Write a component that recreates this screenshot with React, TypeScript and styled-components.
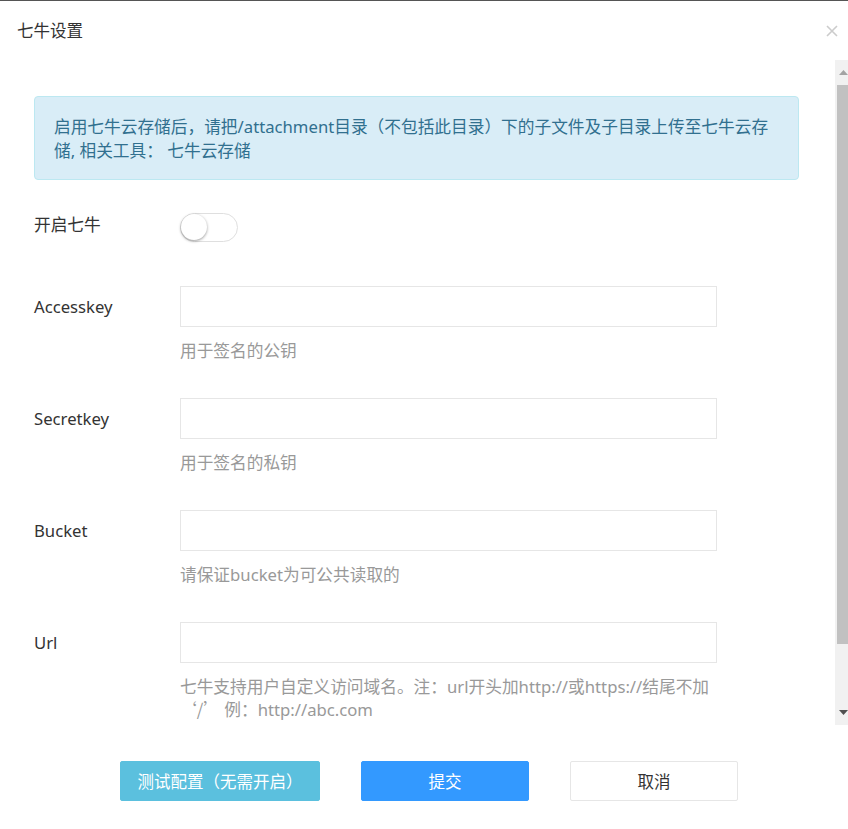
import React, { useState } from "react";
import styled, { createGlobalStyle } from "styled-components";

const GlobalStyle = createGlobalStyle`
  html, body {
    margin: 0;
    padding: 0;
    background: #ffffff;
    overflow: hidden;
  }
  * {
    box-sizing: border-box;
  }
`;

const font = `"Noto Sans", "Noto Sans CJK SC", sans-serif`;
const cjk = `"Noto Sans CJK SC", sans-serif`;

const Dialog = styled.div`
  width: 852px;
  height: 829px;
  border-top: 1px solid #555555;
  background: #ffffff;
  font-family: ${font};
  color: #333333;
  display: flex;
  flex-direction: column;
`;

const Header = styled.div`
  height: 59px;
  display: flex;
  align-items: center;
  justify-content: space-between;
  padding: 0 14px 0 17px;
`;

const Title = styled.h3`
  margin: 0;
  font-size: 16.5px;
  font-weight: 400;
  color: #333333;
  line-height: 22px;
`;

const Close = styled.button`
  border: 0;
  background: transparent;
  padding: 0;
  width: 12px;
  height: 12px;
  display: flex;
  cursor: pointer;
`;

const Main = styled.div`
  display: flex;
  height: 665px;
`;

const Body = styled.div`
  flex: 1;
  overflow: hidden;
  padding: 36px 36px 72px 34px;
`;

/* drawn scrollbar: headless capture hides native ones */
const ScrollTrack = styled.div`
  width: 17px;
  flex-shrink: 0;
  background: #f1f1f1;
  display: flex;
  flex-direction: column;
`;

const ScrollButton = styled.div`
  height: 25px;
  display: flex;
  align-items: center;
  justify-content: center;
`;

const Thumb = styled.div`
  height: 559px;
  margin: 0 2px;
  background: #c1c1c1;
`;

const Spacer = styled.div`
  flex: 1;
`;

const Alert = styled.div`
  background: #d9edf7;
  border: 1px solid #bce8f1;
  border-radius: 4px;
  color: #31708f;
  font-size: 16.7px;
  line-height: 24px;
  padding: 18px 15px 16px 19px;
`;

const AlertLink = styled.a`
  color: #31708f;
  text-decoration: none;
`;

const Row = styled.div<{ $gap?: number }>`
  display: flex;
  align-items: flex-start;
  margin-top: ${(p) => p.$gap ?? 36}px;
`;

const Label = styled.label<{ $h?: number }>`
  width: 146px;
  flex-shrink: 0;
  font-size: 16.7px;
  line-height: ${(p) => p.$h ?? 41}px;
  color: #333333;
`;

const Field = styled.div`
  width: 537px;
`;

const Input = styled.input`
  display: block;
  width: 537px;
  height: 41px;
  border: 1px solid #e6e6e6;
  border-radius: 0;
  outline: none;
  padding: 0 10px;
  font-family: ${font};
  font-size: 16px;
  color: #333333;
  background: #ffffff;
`;

const Help = styled.div`
  margin-top: 13px;
  font-size: 16.7px;
  line-height: 22px;
  color: #999999;
`;

const Quote = styled.span`
  font-family: ${cjk};
`;

const Switch = styled.button<{ $on: boolean }>`
  position: relative;
  width: 58px;
  height: 29px;
  border-radius: 15px;
  border: 1px solid #dfdfdf;
  background: ${(p) => (p.$on ? "#3399ff" : "#ffffff")};
  padding: 0;
  cursor: pointer;
  flex-shrink: 0;
`;

const Knob = styled.span<{ $on: boolean }>`
  position: absolute;
  top: 0;
  left: ${(p) => (p.$on ? "30px" : "0")};
  width: 26px;
  height: 26px;
  border-radius: 50%;
  background: #ffffff;
  box-shadow: 0 1px 3px rgba(0, 0, 0, 0.4);
`;

const Footer = styled.div`
  display: flex;
  gap: 41px;
  padding: 36px 0 0 120px;
`;

const Button = styled.button<{ $variant: "info" | "primary" | "default"; $w: number }>`
  width: ${(p) => p.$w}px;
  height: 40px;
  border-radius: 2px;
  font-family: ${font};
  font-size: 16.5px;
  cursor: pointer;
  border: 1px solid
    ${(p) =>
      p.$variant === "info" ? "#5bc0de" : p.$variant === "primary" ? "#3399ff" : "#e6e6e6"};
  background: ${(p) =>
    p.$variant === "info" ? "#5bc0de" : p.$variant === "primary" ? "#3399ff" : "#ffffff"};
  color: ${(p) => (p.$variant === "default" ? "#333333" : "#ffffff")};
`;

const fields: { label: string; help: React.ReactNode }[] = [
  { label: "Accesskey", help: "用于签名的公钥" },
  { label: "Secretkey", help: "用于签名的私钥" },
  { label: "Bucket", help: "请保证bucket为可公共读取的" },
  {
    label: "Url",
    help: (
      <>
        七牛支持用户自定义访问域名。注：url开头加http://或https://结尾不加 <Quote>‘/’</Quote> 例：http://abc.com
      </>
    ),
  },
];

export default function App() {
  const [on, setOn] = useState(false);
  return (
    <>
      <GlobalStyle />
      <Dialog>
        <Header>
          <Title>七牛设置</Title>
          <Close aria-label="关闭">
            <svg width="12" height="12" viewBox="0 0 12 12">
              <path d="M1 1L11 11M11 1L1 11" stroke="#cccccc" strokeWidth="1.6" />
            </svg>
          </Close>
        </Header>
        <Main>
          <Body>
            <Alert>
              启用七牛云存储后，请把/attachment目录（不包括此目录）下的子文件及子目录上传至七牛云存储, 相关工具：{" "}
              <AlertLink href="#">七牛云存储</AlertLink>
            </Alert>
            <Row $gap={33}>
              <Label $h={24}>开启七牛</Label>
              <Switch $on={on} onClick={() => setOn(!on)}>
                <Knob $on={on} />
              </Switch>
            </Row>
            {fields.map((f, i) => (
              <Row key={f.label} $gap={i === 0 ? 44 : 36}>
                <Label>{f.label}</Label>
                <Field>
                  <Input type="text" />
                  <Help>{f.help}</Help>
                </Field>
              </Row>
            ))}
          </Body>
          <ScrollTrack>
            <ScrollButton>
              <svg width="9" height="5" viewBox="0 0 9 5">
                <polygon points="0,5 4.5,0 9,5" fill="#a3a3a3" />
              </svg>
            </ScrollButton>
            <Thumb />
            <Spacer />
            <ScrollButton>
              <svg width="9" height="5" viewBox="0 0 9 5">
                <polygon points="0,0 9,0 4.5,5" fill="#505050" />
              </svg>
            </ScrollButton>
          </ScrollTrack>
        </Main>
        <Footer>
          <Button $variant="info" $w={200}>测试配置（无需开启）</Button>
          <Button $variant="primary" $w={168}>提交</Button>
          <Button $variant="default" $w={168}>取消</Button>
        </Footer>
      </Dialog>
    </>
  );
}
